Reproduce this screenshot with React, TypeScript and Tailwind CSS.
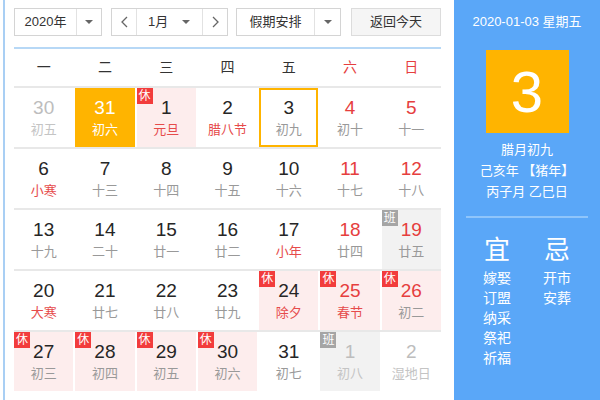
import React from 'react';

type Day = {
  d: number;
  l: string;
  num?: 'dark' | 'red' | 'out' | 'white';
  lun?: 'gray' | 'red' | 'out' | 'white';
  bg?: 'pink' | 'gray' | 'orange';
  tag?: '休' | '班';
  today?: boolean;
};

const numColor = {
  dark: 'text-[#262626]',
  red: 'text-[#e63e3e]',
  out: 'text-[#bdbdbd]',
  white: 'text-white',
};

const lunColor = {
  gray: 'text-[#999999]',
  red: 'text-[#e64b4b]',
  out: 'text-[#c4c4c4]',
  white: 'text-white',
};

const bgColor = {
  pink: 'bg-[#fdeded]',
  gray: 'bg-[#f2f2f2]',
  orange: 'bg-[#ffb400]',
};

const rows: Day[][] = [
  [
    { d: 30, l: '初五', num: 'out', lun: 'out' },
    { d: 31, l: '初六', num: 'white', lun: 'white', bg: 'orange' },
    { d: 1, l: '元旦', lun: 'red', bg: 'pink', tag: '休' },
    { d: 2, l: '腊八节', lun: 'red' },
    { d: 3, l: '初九', today: true },
    { d: 4, l: '初十', num: 'red' },
    { d: 5, l: '十一', num: 'red' },
  ],
  [
    { d: 6, l: '小寒', lun: 'red' },
    { d: 7, l: '十三' },
    { d: 8, l: '十四' },
    { d: 9, l: '十五' },
    { d: 10, l: '十六' },
    { d: 11, l: '十七', num: 'red' },
    { d: 12, l: '十八', num: 'red' },
  ],
  [
    { d: 13, l: '十九' },
    { d: 14, l: '二十' },
    { d: 15, l: '廿一' },
    { d: 16, l: '廿二' },
    { d: 17, l: '小年', lun: 'red' },
    { d: 18, l: '廿四', num: 'red' },
    { d: 19, l: '廿五', num: 'red', bg: 'gray', tag: '班' },
  ],
  [
    { d: 20, l: '大寒', lun: 'red' },
    { d: 21, l: '廿七' },
    { d: 22, l: '廿八' },
    { d: 23, l: '廿九' },
    { d: 24, l: '除夕', lun: 'red', bg: 'pink', tag: '休' },
    { d: 25, l: '春节', num: 'red', lun: 'red', bg: 'pink', tag: '休' },
    { d: 26, l: '初二', num: 'red', bg: 'pink', tag: '休' },
  ],
  [
    { d: 27, l: '初三', bg: 'pink', tag: '休' },
    { d: 28, l: '初四', bg: 'pink', tag: '休' },
    { d: 29, l: '初五', bg: 'pink', tag: '休' },
    { d: 30, l: '初六', bg: 'pink', tag: '休' },
    { d: 31, l: '初七' },
    { d: 1, l: '初八', num: 'out', lun: 'out', bg: 'gray', tag: '班' },
    { d: 2, l: '湿地日', num: 'out', lun: 'out' },
  ],
];

const weekdays = ['一', '二', '三', '四', '五', '六', '日'];

function Caret() {
  return (
    <svg width="8" height="4" viewBox="0 0 8 4">
      <polygon points="0,0 8,0 4,4" fill="#666" />
    </svg>
  );
}

function Chevron({ dir }: { dir: 'left' | 'right' }) {
  return (
    <svg width="7" height="12" viewBox="0 0 7 12">
      <polyline
        points={dir === 'left' ? '6,1 1,6 6,11' : '1,1 6,6 1,11'}
        fill="none"
        stroke="#666"
        strokeWidth="1.3"
      />
    </svg>
  );
}

function Cell({ day }: { day: Day }) {
  const num = numColor[day.num ?? 'dark'];
  const lun = lunColor[day.lun ?? 'gray'];
  const bg = day.bg ? bgColor[day.bg] : '';
  return (
    <div
      className={`relative h-[59px] flex flex-col items-center ${bg} ${
        day.today ? 'border-2 border-[#ffb400] pt-[6px]' : 'pt-[8px]'
      }`}
    >
      {day.tag && (
        <span
          className={`absolute top-0 left-0 w-[16px] h-[16px] flex items-center justify-center text-[12px] leading-none text-white ${
            day.tag === '休' ? 'bg-[#f23c3c]' : 'bg-[#a5a5a5]'
          }`}
        >
          {day.tag}
        </span>
      )}
      <span className={`text-[19px] leading-[24px] ${num}`}>{day.d}</span>
      <span className={`mt-[2px] text-[13px] leading-[16px] whitespace-nowrap ${lun}`}>{day.l}</span>
    </div>
  );
}

export default function App() {
  return (
    <div className="w-[600px] h-[400px] flex bg-white overflow-hidden [font-family:'Liberation_Sans','Noto_Sans_CJK_SC',sans-serif]">
      <div className="w-[3px]" />
      <div className="w-[2px] bg-[#a9cff4]" />

      {/* Calendar body */}
      <div className="w-[449px] pl-[9px] pr-[13px] pt-[8px]">
        {/* Toolbar */}
        <div className="flex h-[28px] text-[13px] text-[#333333] whitespace-nowrap">
          <div className="w-[88px] flex border border-[#d4d4d4]">
            <div className="w-[61px] flex items-center justify-center">2020年</div>
            <div className="flex-1 flex items-center justify-center border-l border-[#e2e2e2]">
              <Caret />
            </div>
          </div>
          <div className="ml-[9px] w-[117px] flex border border-[#d4d4d4]">
            <div className="w-[24px] flex items-center justify-center">
              <Chevron dir="left" />
            </div>
            <div className="w-[67px] flex items-center border-x border-[#e2e2e2] pl-[11px] gap-[14px]">
              <span>1月</span>
              <Caret />
            </div>
            <div className="flex-1 flex items-center justify-center">
              <Chevron dir="right" />
            </div>
          </div>
          <div className="ml-[8px] w-[105px] flex border border-[#d4d4d4]">
            <div className="w-[77px] flex items-center justify-center">假期安排</div>
            <div className="flex-1 flex items-center justify-center border-l border-[#e2e2e2]">
              <Caret />
            </div>
          </div>
          <button className="ml-[10px] w-[90px] border border-[#dcdcdc] bg-[#f5f5f5] text-[#333333]">
            返回今天
          </button>
        </div>

        <div className="mt-[11px] h-[2px] bg-[#b7d8f6]" />

        {/* Weekday header */}
        <div className="grid grid-cols-7 gap-x-[2px] h-[37px] items-center text-[14px]">
          {weekdays.map((w, i) => (
            <div
              key={w}
              className={`text-center ${i >= 5 ? 'text-[#e63e3e]' : 'text-[#333333]'}`}
            >
              {w}
            </div>
          ))}
        </div>

        {/* Day rows */}
        {rows.map((row, ri) => (
          <div
            key={ri}
            className="grid grid-cols-7 gap-x-[2px] border-t-2 border-[#e8e8e8]"
          >
            {row.map((day, di) => (
              <Cell key={di} day={day} />
            ))}
          </div>
        ))}
      </div>

      {/* Side panel */}
      <div className="flex-1 bg-[#5aa7f8] flex flex-col items-center pt-[13px] text-white">
        <div className="text-[13px] leading-[18px]">2020-01-03 星期五</div>
        <div className="mt-[19px] w-[83px] h-[83px] bg-[#ffb400] flex items-center justify-center">
          <span className="text-[58px] leading-none">3</span>
        </div>
        <div className="mt-[6px] flex flex-col items-center text-[13px] leading-[21px]">
          <span>腊月初九</span>
          <span>己亥年 【猪年】</span>
          <span>丙子月 乙巳日</span>
        </div>
        <div className="mt-[14px] w-[122px] h-[2px] bg-[#8fc5fb]" />
        <div className="mt-[17px] w-[120px] grid grid-cols-2">
          <div className="flex flex-col items-center">
            <span className="text-[26px] leading-[30px]">宜</span>
            <div className="mt-[3px] flex flex-col items-center text-[14px] leading-[20px]">
              <span>嫁娶</span>
              <span>订盟</span>
              <span>纳采</span>
              <span>祭祀</span>
              <span>祈福</span>
            </div>
          </div>
          <div className="flex flex-col items-center">
            <span className="text-[26px] leading-[30px]">忌</span>
            <div className="mt-[3px] flex flex-col items-center text-[14px] leading-[20px]">
              <span>开市</span>
              <span>安葬</span>
            </div>
          </div>
        </div>
      </div>
    </div>
  );
}
